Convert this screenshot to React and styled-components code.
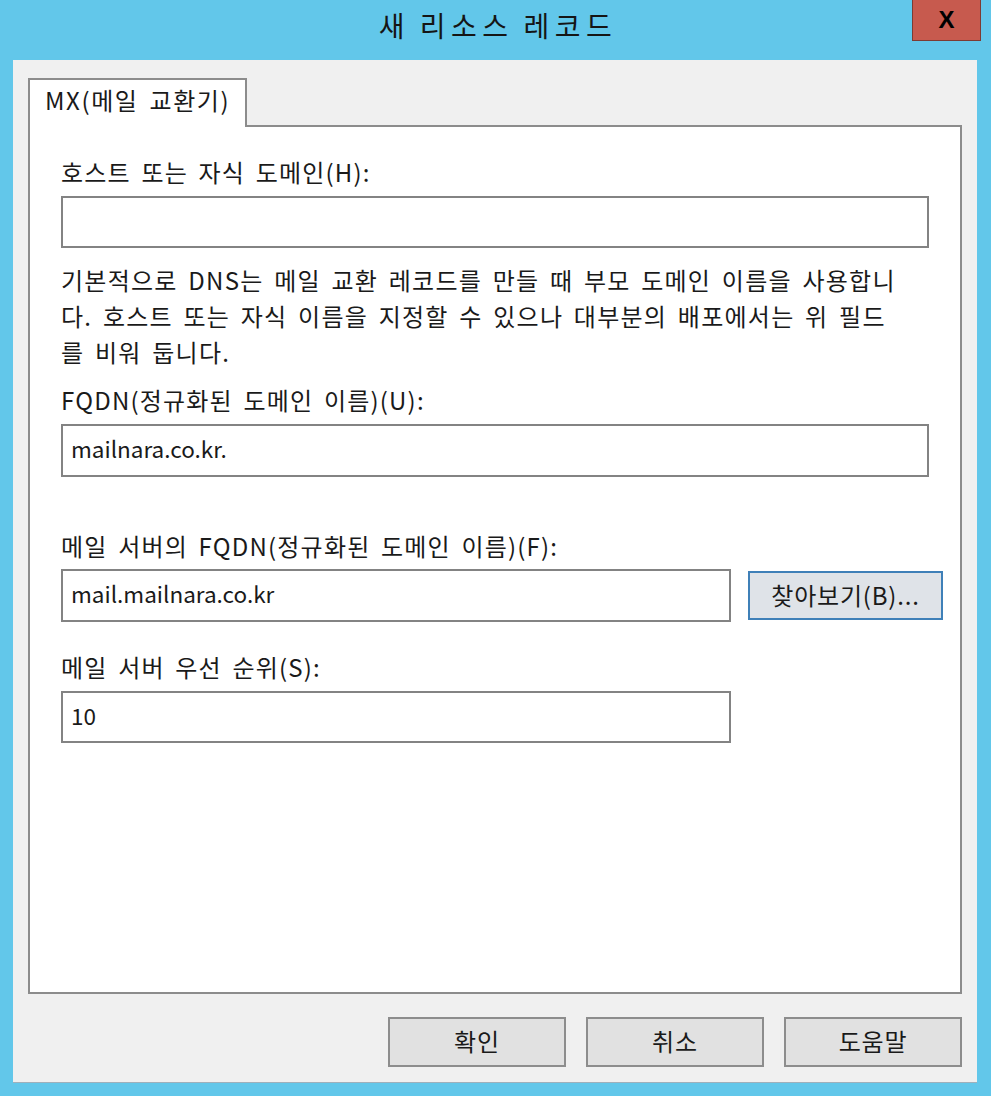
import React from "react";
import styled, { createGlobalStyle } from "styled-components";

const Global = createGlobalStyle`
  html, body { margin: 0; padding: 0; }
  body {
    background: #62c7ea;
    font-family: "Noto Sans CJK KR", "Noto Sans", sans-serif;
  }
  * { box-sizing: border-box; }
`;

const Window = styled.div`
  width: 991px;
  height: 1096px;
  background: #62c7ea;
  display: flex;
  flex-direction: column;
`;

const TitleBar = styled.div`
  height: 60px;
  display: grid;
  grid-template-columns: 1fr auto 1fr;
  align-items: start;
`;

const Title = styled.div`
  grid-column: 2;
  margin-top: 5px;
  font-size: 28px;
  line-height: 40px;
  letter-spacing: 5.5px;
  word-spacing: -2px;
  color: #151515;
  padding-left: 5px;
`;

const CloseButton = styled.div`
  grid-column: 3;
  justify-self: end;
  margin-right: 10px;
  width: 69px;
  height: 41px;
  background: #c75a4e;
  border: 1px solid #7d3b33;
  border-top: none;
  display: flex;
  align-items: center;
  justify-content: center;
  font-family: "Liberation Sans", Arial, sans-serif;
  font-weight: bold;
  font-size: 24px;
  color: #000;
`;

const Body = styled.div`
  flex: 1;
  margin: 0 14px 13px 13px;
  background: #f0f0f0;
  border-bottom: 1px solid #9fb0bb;
  padding: 18px 15px 0 15px;
  display: flex;
  flex-direction: column;
`;

const TabStrip = styled.div`
  display: flex;
  position: relative;
  z-index: 1;
  margin-bottom: -2px;
`;

const Tab = styled.div`
  width: 219px;
  height: 49px;
  background: #fff;
  border: 2px solid #8c8c8c;
  border-bottom: none;
  padding: 4px 0 0 15px;
  font-size: 24px;
  line-height: 32px;
  letter-spacing: 1.6px;
  word-spacing: 4px;
  color: #1a1a1a;
  white-space: nowrap;
`;

const TabPanel = styled.div`
  height: 869px;
  background: #fff;
  border: 2px solid #8c8c8c;
  padding: 30px 31px 0 31px;
  display: flex;
  flex-direction: column;
`;

const Label = styled.div`
  font-size: 24px;
  line-height: 30px;
  letter-spacing: 1.2px;
  word-spacing: 4px;
  color: #1a1a1a;
  margin-top: ${(p) => p.$gap || 0}px;
  margin-bottom: ${(p) => p.$after ?? 9}px;
  white-space: nowrap;
`;

const Row = styled.div`
  display: flex;
  align-items: center;
  gap: 17px;
`;

const Input = styled.div`
  flex-shrink: 0;
  width: ${(p) => p.$w}px;
  height: ${(p) => p.$h || 52}px;
  border: 2px solid #838383;
  background: #fff;
  padding: 0 8px 5px 8px;
  display: flex;
  align-items: center;
  font-size: 22.5px;
  color: #1a1a1a;
`;

const Help = styled.div`
  margin-top: 14px;
  font-size: 24px;
  line-height: 36px;
  letter-spacing: 1.25px;
  word-spacing: 4px;
  color: #1a1a1a;
  white-space: nowrap;
`;

const Button = styled.div`
  flex-shrink: 0;
  width: ${(p) => p.$w || 178}px;
  height: ${(p) => p.$h || 50}px;
  background: ${(p) => (p.$focus ? "#dfe3e8" : "#e1e1e1")};
  border: 2px solid ${(p) => (p.$focus ? "#3f80b8" : "#8d8d8d")};
  display: flex;
  align-items: center;
  justify-content: center;
  padding-bottom: 3px;
  font-size: 24px;
  letter-spacing: 0.8px;
  color: #1a1a1a;
  white-space: nowrap;
`;

const Footer = styled.div`
  display: flex;
  justify-content: flex-end;
  gap: 20px;
  padding-top: 23px;
`;

export default function App() {
  return (
    <>
      <Global />
      <Window>
        <TitleBar>
          <Title>새 리소스 레코드</Title>
          <CloseButton>X</CloseButton>
        </TitleBar>
        <Body>
          <TabStrip>
            <Tab>MX(메일 교환기)</Tab>
          </TabStrip>
          <TabPanel>
            <Label>호스트 또는 자식 도메인(H):</Label>
            <Input $w={868} />
            <Help>
              기본적으로 DNS는 메일 교환 레코드를 만들 때 부모 도메인 이름을 사용합니
              <br />
              다. 호스트 또는 자식 이름을 지정할 수 있으나 대부분의 배포에서는 위 필드
              <br />
              를 비워 둡니다.
            </Help>
            <Label $gap={15}>FQDN(정규화된 도메인 이름)(U):</Label>
            <Input $w={868} $h={53}>mailnara.co.kr.</Input>
            <Label $gap={54} $after={8}>메일 서버의 FQDN(정규화된 도메인 이름)(F):</Label>
            <Row>
              <Input $w={670} $h={53}>mail.mailnara.co.kr</Input>
              <Button $focus $w={195} $h={49}>찾아보기(B)...</Button>
            </Row>
            <Label $gap={30}>메일 서버 우선 순위(S):</Label>
            <Input $w={670}>10</Input>
          </TabPanel>
          <Footer>
            <Button>확인</Button>
            <Button>취소</Button>
            <Button>도움말</Button>
          </Footer>
        </Body>
      </Window>
    </>
  );
}
